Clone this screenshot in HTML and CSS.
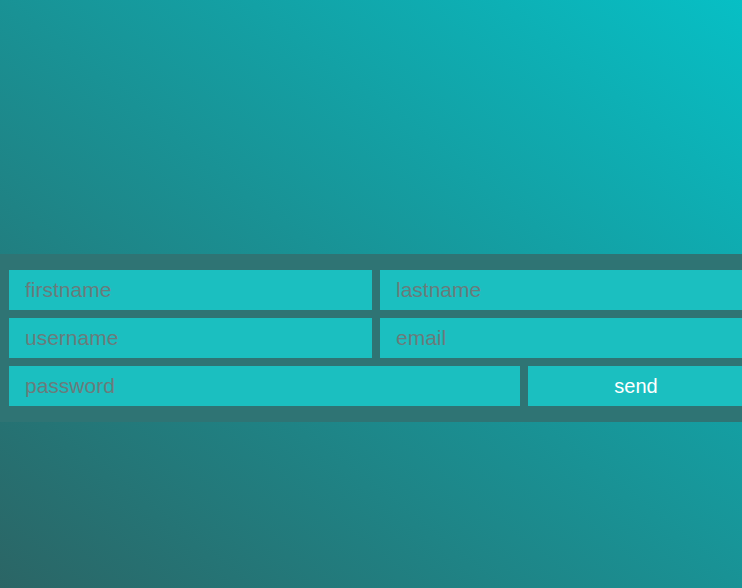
FILE: index.html
```html
<!DOCTYPE html>
<html>
<head>
<meta charset="utf-8">
<link rel="stylesheet" href="styles.css">
</head>
<body>
<div class="page">
  <form class="band">
    <div class="row">
      <input class="field half" type="text" placeholder="firstname">
      <input class="field half" type="text" placeholder="lastname">
    </div>
    <div class="row">
      <input class="field half" type="text" placeholder="username">
      <input class="field half" type="text" placeholder="email">
    </div>
    <div class="row">
      <input class="field wide" type="password" placeholder="password">
      <button class="send" type="button">send</button>
    </div>
  </form>
</div>
</body>
</html>
```

FILE: styles.css
```css
html, body {
  margin: 0;
  padding: 0;
  height: 100%;
  overflow: hidden;
}
body {
  background: linear-gradient(to top right, #2b6565 0%, #07bfc5 100%);
  font-family: "Liberation Sans", Arial, sans-serif;
}
.page {
  height: 588px;
  display: flex;
  flex-direction: column;
  justify-content: flex-start;
  padding-top: 254px;
  box-sizing: border-box;
}
.band {
  background: #2f7474;
  padding: 16px 8px 16px 9px;
  width: 752px;
  box-sizing: border-box;
  display: flex;
  flex-direction: column;
  gap: 8px;
  margin: 0;
}
.row {
  display: flex;
  gap: 8px;
}
.field, .send {
  height: 40px;
  border: none;
  outline: none;
  margin: 0;
  background: #1bbfc0;
  font-family: "Liberation Sans", Arial, sans-serif;
  box-sizing: border-box;
  border-radius: 0;
}
.field {
  padding: 0 16px;
  font-size: 21px;
  color: #6a7b7b;
}
.field::placeholder {
  color: #6a7b7b;
  opacity: 1;
}
.half {
  width: 363px;
  flex: none;
}
.wide {
  width: 511px;
  flex: none;
}
.send {
  width: 216px;
  flex: none;
  font-size: 20px;
  color: #ffffff;
  text-align: center;
  padding: 0;
  cursor: pointer;
}
```
